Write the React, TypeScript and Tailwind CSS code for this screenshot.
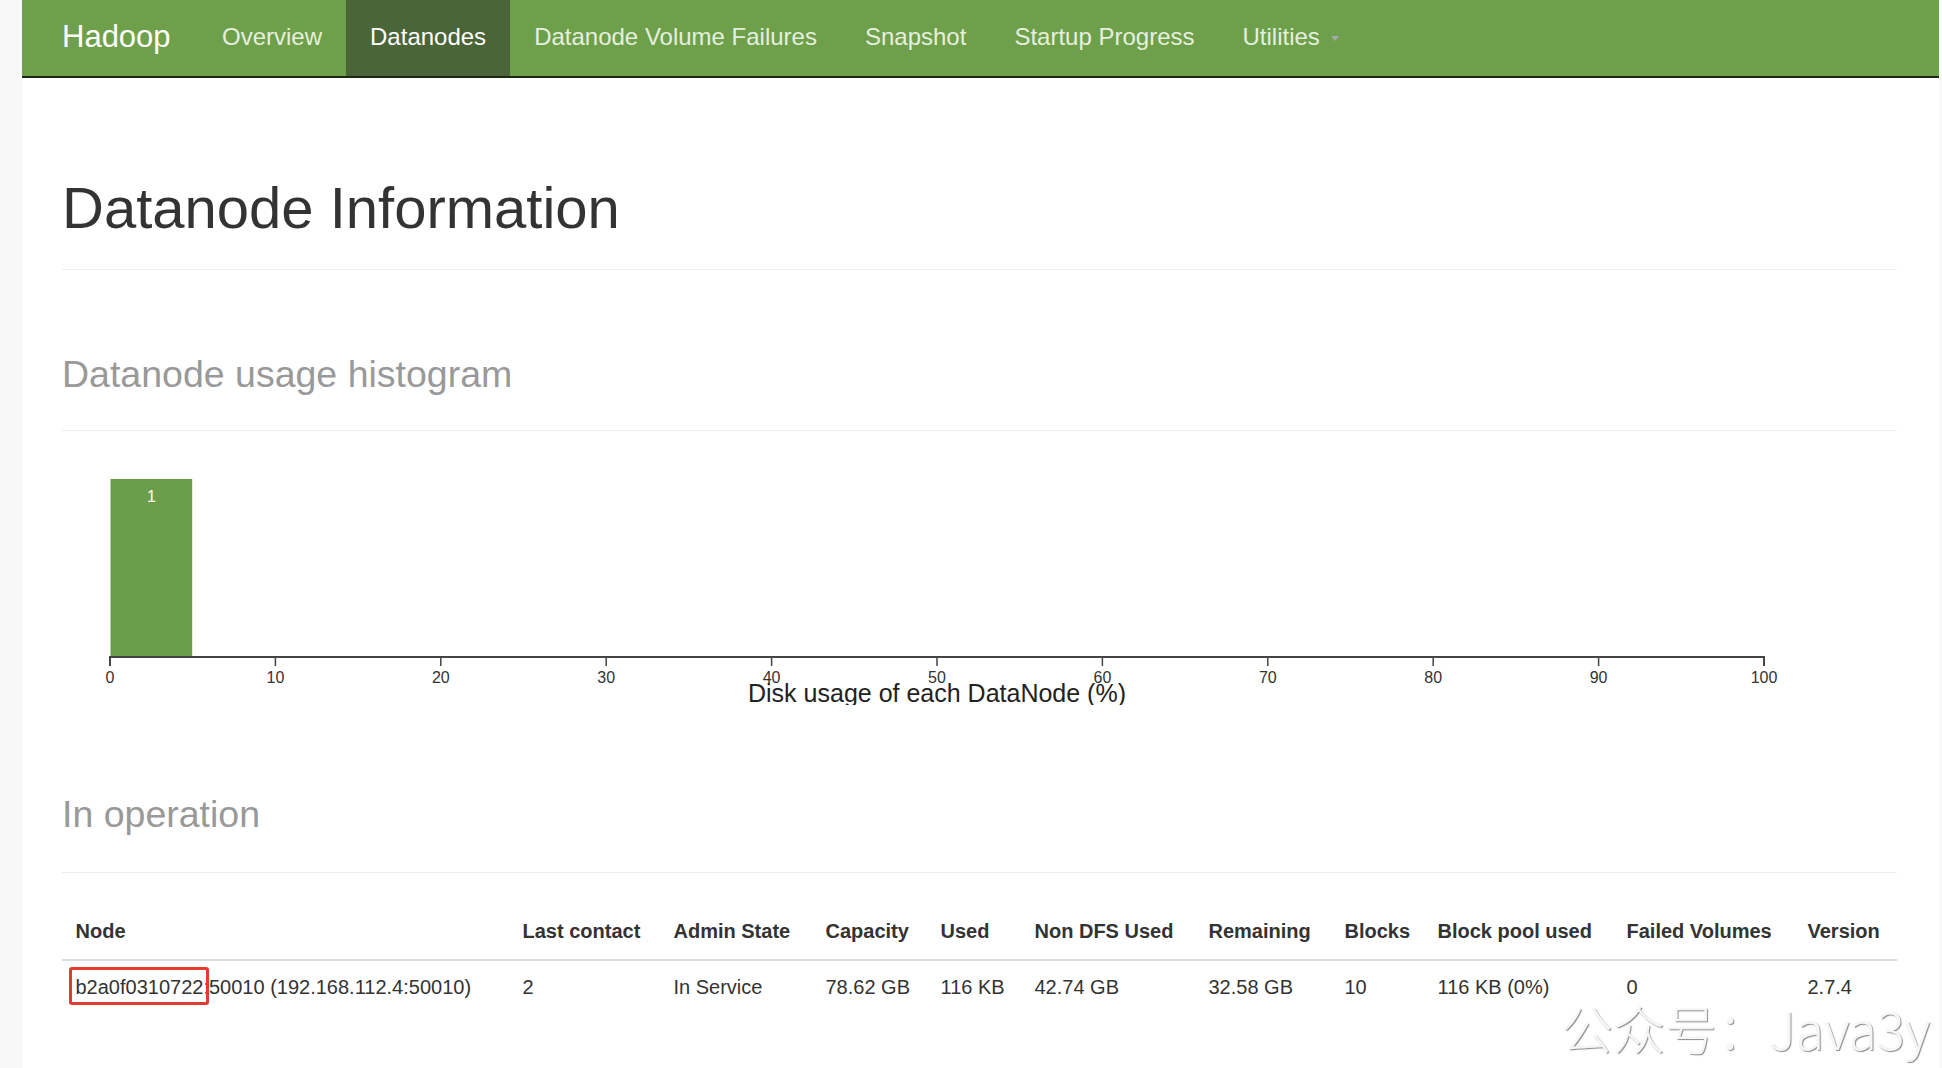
const navLinks = [
  { label: "Overview", active: false },
  { label: "Datanodes", active: true },
  { label: "Datanode Volume Failures", active: false },
  { label: "Snapshot", active: false },
  { label: "Startup Progress", active: false },
];

const columns = [
  { label: "Node", w: "w-[447px]" },
  { label: "Last contact", w: "w-[151px]" },
  { label: "Admin State", w: "w-[152px]" },
  { label: "Capacity", w: "w-[115px]" },
  { label: "Used", w: "w-[94px]" },
  { label: "Non DFS Used", w: "w-[174px]" },
  { label: "Remaining", w: "w-[136px]" },
  { label: "Blocks", w: "w-[93px]" },
  { label: "Block pool used", w: "w-[189px]" },
  { label: "Failed Volumes", w: "w-[181px]" },
  { label: "Version", w: "w-[103px]" },
];

const row = ["2", "In Service", "78.62 GB", "116 KB", "42.74 GB", "32.58 GB", "10", "116 KB (0%)", "0", "2.7.4"];

// x of 0% and 100% inside the svg
const X0 = 48;
const X100 = 1702;
const sx = (v: number) => X0 + ((X100 - X0) * v) / 100;

function Histogram() {
  const ticks = [0, 10, 20, 30, 40, 50, 60, 70, 80, 90, 100];
  return (
    <svg width="1835" height="245" className="mt-[29px] block">
      <rect x={sx(0) + 0.5} y="19" width={sx(5) - sx(0) - 1} height="177" fill="#6b9e4a" />
      <text x={(sx(0) + sx(5)) / 2} y="42" textAnchor="middle" fill="#ffffff" fontSize="16" fontFamily="Liberation Sans, Arial, sans-serif">
        1
      </text>
      <path d={`M${X0},206V197H${X100}V206`} fill="none" stroke="#444" strokeWidth="2" />
      {ticks.map((t) => (
        <g key={t}>
          <line x1={sx(t)} x2={sx(t)} y1="197" y2="206" stroke="#444" strokeWidth="1.5" />
          <text x={sx(t)} y="223" textAnchor="middle" fill="#333" fontSize="16" fontFamily="Liberation Sans, Arial, sans-serif">
            {t}
          </text>
        </g>
      ))}
      <text x={(X0 + X100) / 2} y="242" textAnchor="middle" fill="#222" fontSize="25" fontFamily="Liberation Sans, Arial, sans-serif">
        Disk usage of each DataNode (%)
      </text>
    </svg>
  );
}

export default function App() {
  return (
    <div className="relative flex h-[1068px] w-[1942px] overflow-hidden bg-white font-['Liberation_Sans',Arial,sans-serif] text-[#333]">
      <div className="w-[22px] shrink-0 bg-[#f8f8f8]" />

      <div className="w-[1917px] shrink-0">
        {/* navbar */}
        <nav className="flex h-[78px] items-stretch border-b-2 border-[#1d2915] bg-[#6ea04c] pb-[2px] pl-[40px]">
          <a className="flex w-[136px] items-center text-[31px] text-white">Hadoop</a>
          {navLinks.map((l) => (
            <a
              key={l.label}
              className={
                l.active
                  ? "-mb-[2px] flex items-center bg-[#4a6538] px-[24px] pb-[2px] text-[24px] text-white"
                  : "flex items-center px-[24px] text-[24px] text-[#e6efdd]"
              }
            >
              {l.label}
            </a>
          ))}
          <a className="flex items-center px-[24px] text-[24px] text-[#e6efdd]">
            Utilities
            <span className="ml-[11px] mt-[2px] h-0 w-0 border-x-[4px] border-t-[5px] border-x-transparent border-t-[#a6a6b0]" />
          </a>
        </nav>

        <main className="pl-[40px] pr-[42px]">
          <div className="mt-[98px] border-b border-[#eeeeee] pb-[29px]">
            <h1 className="text-[58px] leading-[64px] text-[#333]">Datanode Information</h1>
          </div>

          <div className="mt-[84px] border-b border-[#eeeeee] pb-[35px]">
            <h2 className="text-[37.5px] leading-[41px] text-[#999]">Datanode usage histogram</h2>
          </div>

          <Histogram />

          <div className="mt-[89px] border-b border-[#eeeeee] pb-[37px]">
            <h2 className="text-[37.5px] leading-[41px] text-[#999]">In operation</h2>
          </div>

          <table className="mt-[30px] w-[1835px] table-fixed border-collapse text-[20px] leading-[28px]">
            <thead>
              <tr>
                {columns.map((c) => (
                  <th key={c.label} className={`${c.w} border-b-2 border-[#dddddd] pb-[14px] pl-[13.5px] pt-[14px] text-left font-bold`}>
                    {c.label}
                  </th>
                ))}
              </tr>
            </thead>
            <tbody>
              <tr>
                <td className="pl-[13.5px] pt-[12px] whitespace-nowrap">
                  <span className="relative">
                    b2a0f0310722:
                    <span className="absolute -left-[7px] -top-[9px] -bottom-[7px] right-0 rounded-[3px] border-[3px] border-[#e33b2e]" />
                  </span>
                  50010 (192.168.112.4:50010)
                </td>
                {row.map((v, i) => (
                  <td key={i} className="pl-[13.5px] pt-[12px] whitespace-nowrap">
                    {v}
                  </td>
                ))}
              </tr>
            </tbody>
          </table>
        </main>
      </div>

      <div className="flex-1 bg-[#f8f8f8]" />

      {/* watermark */}
      <div className="absolute left-[1561px] top-[1001px] whitespace-nowrap font-['Noto_Sans_CJK_SC','Liberation_Sans',sans-serif] text-[52px] font-light leading-[54px] text-[#f6f6f6] [text-shadow:1px_1px_1px_#8a8a8a,-1px_-1px_0_#ffffff]">
        公众号：Java3y
      </div>
    </div>
  );
}
